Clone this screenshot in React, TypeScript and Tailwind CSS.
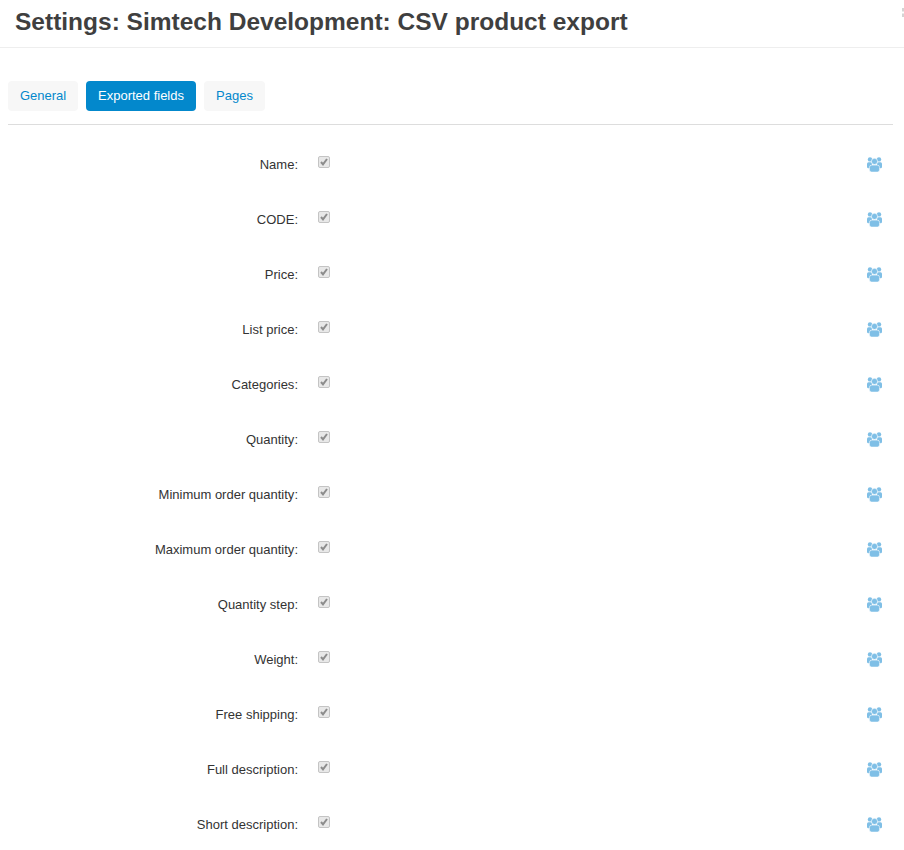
const fields = [
  "Name",
  "CODE",
  "Price",
  "List price",
  "Categories",
  "Quantity",
  "Minimum order quantity",
  "Maximum order quantity",
  "Quantity step",
  "Weight",
  "Free shipping",
  "Full description",
  "Short description",
];

function GroupIcon() {
  return (
    <svg width="15" height="15" viewBox="0 0 15 15" className="block" fill="#7fbfe6">
      <circle cx="3" cy="2.400" r="2.200" />
      <circle cx="12" cy="2.400" r="2.200" />
      <rect x="0" y="5.300" width="5" height="6" rx="1.500" />
      <rect x="10" y="5.300" width="5" height="6" rx="1.500" />
      <circle cx="7.500" cy="4.400" r="3.100" stroke="#ffffff" strokeWidth="0.600" />
      <rect x="2.400" y="8.100" width="10.200" height="7" rx="2.400" stroke="#ffffff" strokeWidth="0.600" />
    </svg>
  );
}

function DisabledCheck() {
  return (
    <span className="relative ml-[20px] mt-[21px] block h-[12px] w-[12px]">
      <input
        type="checkbox"
        checked
        disabled
        readOnly
        className="block h-[12px] w-[12px] appearance-none rounded-[2px] border border-[#c4c4c4] bg-[#e8e8e8]"
      />
      <svg
        width="12"
        height="12"
        viewBox="0 0 12 12"
        className="absolute left-0 top-0"
        fill="none"
        stroke="#8c8c8c"
        strokeWidth="2"
      >
        <path d="M3 6l2 2.300L9 3" />
      </svg>
    </span>
  );
}

export default function App() {
  return (
    <div className="relative h-[850px] overflow-hidden bg-white font-['Liberation_Sans',Arial,sans-serif] text-[13px] text-[#333333]">
      <div className="h-[48px] border-b border-[#eeeeee] pl-[15px] pt-[5px]">
        <h1 className="text-[24.5px] font-bold leading-[34px] text-[#3f3f3f]">
          Settings: Simtech Development: CSV product export
        </h1>
      </div>
      <svg width="2" height="10" viewBox="0 0 2 10" className="absolute left-[902px] top-[8px]" fill="#d4d4d4">
        <rect x="0" y="0" width="2" height="3.500" />
        <rect x="0" y="5.500" width="2" height="3.500" />
      </svg>
      <div className="mx-[8px] mt-[33px] w-[885px] border-b border-[#dddddd] pb-[13px]">
        <div className="flex gap-[8px]">
          <a className="flex h-[30px] w-[70px] items-center justify-center rounded-[4px] bg-[#f7f7f7] text-[#0388cc]">General</a>
          <a className="flex h-[30px] w-[110px] items-center justify-center rounded-[4px] bg-[#0388cc] text-white">Exported fields</a>
          <a className="flex h-[30px] w-[61px] items-center justify-center rounded-[4px] bg-[#f7f7f7] text-[#0388cc]">Pages</a>
        </div>
      </div>
      <div className="pt-[10px]">
        {fields.map((f) => (
          <div key={f} className="flex h-[55px] items-start">
            <label className="w-[298px] pt-[22px] text-right leading-[15px]">{f}:</label>
            <DisabledCheck />
            <div className="ml-[537px] mt-[22px]">
              <GroupIcon />
            </div>
          </div>
        ))}
      </div>
    </div>
  );
}
